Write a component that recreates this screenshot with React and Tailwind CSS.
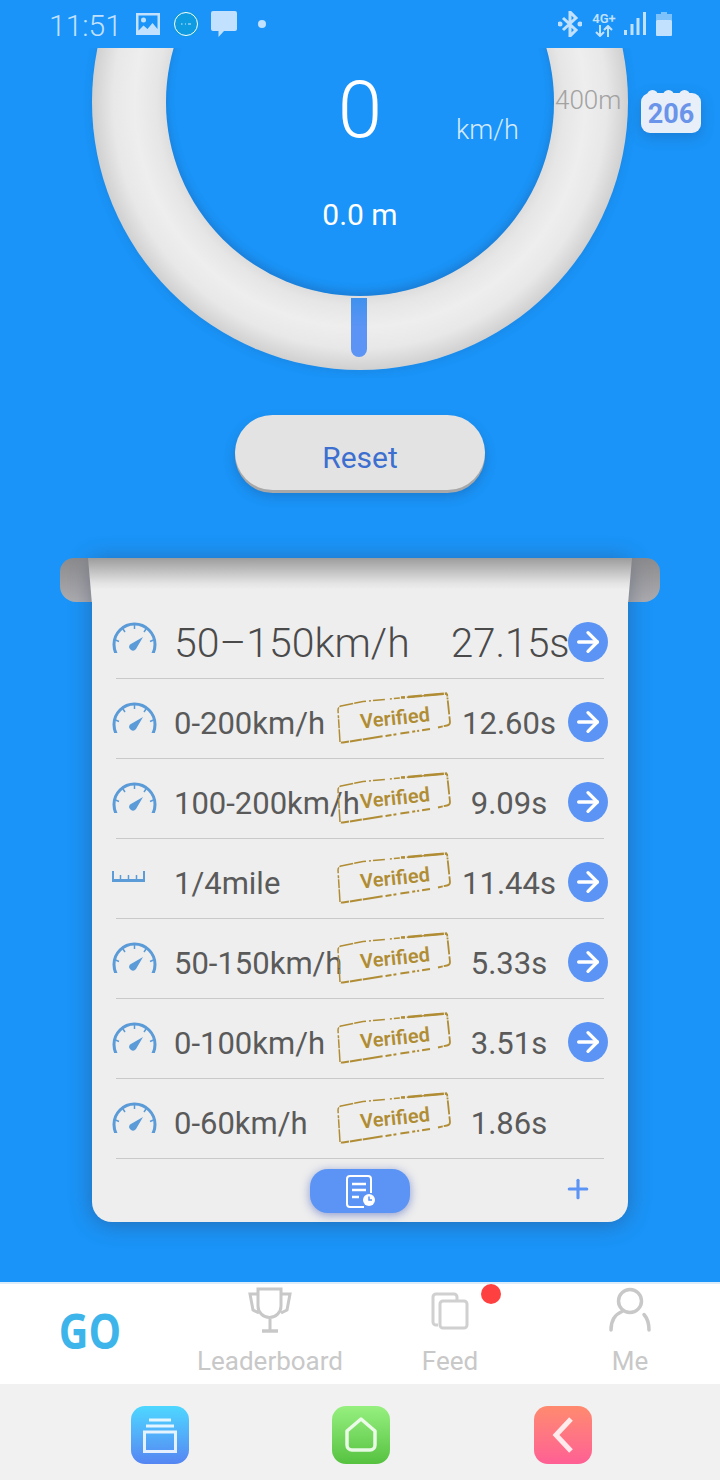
import { ArrowRight, Plus } from 'lucide-react';

const rows = [
  { icon: 'gauge', label: '0-200km/h', time: '12.60s', arrow: true },
  { icon: 'gauge', label: '100-200km/h', time: '9.09s', arrow: true },
  { icon: 'ruler', label: '1/4mile', time: '11.44s', arrow: true },
  { icon: 'gauge', label: '50-150km/h', time: '5.33s', arrow: true },
  { icon: 'gauge', label: '0-100km/h', time: '3.51s', arrow: true },
  { icon: 'gauge', label: '0-60km/h', time: '1.86s', arrow: false },
];

function Gauge() {
  return (
    <svg width="45" height="31" viewBox="0 0 45 31" fill="none" stroke="#5b9bd8" className="shrink-0 -translate-y-[5px]">
      <circle cx="22.500" cy="22.500" r="20.500" strokeWidth="3" />
      <path d="M22.500 3v4M11 7l2 3M34 7l-2 3M3.500 18l3.500 1.500M41.500 18l-3.500 1.500" strokeWidth="1.500" />
      <path d="M18 22.500 L31 15 L24 27 A3.500 3.500 0 0 1 18 22.500Z" fill="#5b9bd8" stroke="none" />
    </svg>
  );
}

function Ruler() {
  return (
    <div className="flex h-[34px] w-[45px] shrink-0 items-center">
      <svg width="33" height="11" viewBox="0 0 33 11" fill="none" stroke="#5b9bd8" className="-mt-3">
        <path d="M0 9.500h33" strokeWidth="3" />
        <path d="M1 0v9M32 0v9" strokeWidth="2" />
        <path d="M8.500 4v5M16.500 4v5M24.500 4v5" strokeWidth="1.500" />
      </svg>
    </div>
  );
}

function Stamp() {
  return (
    <div className="relative h-[52px] w-[116px] shrink-0 -translate-y-[5px]">
      <svg width="116" height="52" viewBox="0 0 116 52" fill="none" stroke="#b08d35" className="absolute inset-0">
        <path d="M28 9.500 L6 14 Q3 15 3 18 L5 50" strokeWidth="1.500" strokeDasharray="9 1 14 1 6 2 3 1" />
        <path d="M28 9.500 L112 1.500" strokeWidth="1.500" strokeDasharray="3 3 2 2 12 5 2 2 6 3 2 2 8 4 2 1" />
        <path d="M66 5.500 L112 1.500" strokeWidth="2.500" strokeDasharray="4 3 14 2 20 1" />
        <path d="M112 1.500 L115 30 Q115 33 112 33.500 L103 35.500" strokeWidth="1.800" strokeDasharray="3 1 2 1 14 2 14 1 8 6" />
        <path d="M95 37 L8 50.500 Q5 51 5 49" strokeWidth="2" strokeDasharray="8 3 2 2 3 3 9 4 3 2 6 3 20 1 12 1" />
      </svg>
      <span className="absolute inset-0 flex -rotate-6 items-center justify-center pl-1 text-[20px] font-semibold text-[#b08d35]">
        Verified
      </span>
    </div>
  );
}

function GoArrow() {
  return (
    <div className="relative z-10 flex h-10 w-10 shrink-0 -translate-y-px items-center justify-center rounded-full bg-[#5b94f5]">
      <ArrowRight size={32} strokeWidth={2.500} className="text-white" />
    </div>
  );
}

function StatusBar() {
  return (
    <div className="relative z-10 flex h-12 shrink-0 items-center bg-[#1a94f8] pl-[49px] pr-[48px] text-[#c2e1ff]">
      <span className="w-[87px] translate-y-px text-[30px] font-light">11:51</span>
      <svg width="24" height="24" viewBox="0 0 24 24" className="shrink-0">
        <path fillRule="evenodd" d="M0 1h24v22H0zM2.500 3.500v15l5-5 4 3.500 5-6 5 6V3.500z" fill="currentColor" />
        <circle cx="7.500" cy="8" r="2.500" fill="currentColor" />
      </svg>
      <svg width="26" height="26" viewBox="0 0 26 26" className="ml-[13px] shrink-0">
        <circle cx="13" cy="13" r="13" fill="#0f9be2" />
        <circle cx="13" cy="13" r="11.500" fill="none" stroke="#fff" strokeWidth="1" />
        <path d="M8 13h1.500M12 13h1M15 13h3" stroke="#cfeaff" strokeWidth="1" />
      </svg>
      <svg width="26" height="26" viewBox="0 0 26 26" className="ml-[12px] shrink-0">
        <path d="M2 0h22a2 2 0 0 1 2 2v16a2 2 0 0 1-2 2H13l-5.500 6v-6H2a2 2 0 0 1-2-2V2a2 2 0 0 1 2-2z" fill="currentColor" />
      </svg>
      <div className="ml-[21px] h-2 w-2 rounded-full bg-[#c2e1ff]" />
      <div className="ml-auto flex items-center">
        <svg width="24" height="26" viewBox="0 0 24 26" fill="none" stroke="currentColor" strokeWidth="3" className="shrink-0">
          <path d="M5 7l13 12-6 6V1l6 6L5 19" />
          <circle cx="2" cy="13" r="1" fill="currentColor" />
          <circle cx="22" cy="13" r="1" fill="currentColor" />
        </svg>
        <div className="ml-[9px] flex w-[26px] flex-col items-center">
          <span className="text-[13px] leading-[13px] font-semibold">4G+</span>
          <svg width="20" height="12" viewBox="0 0 18 12" fill="none" stroke="currentColor" strokeWidth="2">
            <path d="M5 0v10M1 7l4 4 4-4M13 12V2M9 5l4-4 4 4" />
          </svg>
        </div>
        <svg width="22" height="24" viewBox="0 0 22 24" className="ml-[7px] shrink-0">
          <rect x="0" y="18" width="3" height="5" fill="currentColor" />
          <rect x="6.500" y="12" width="3" height="11" fill="currentColor" />
          <rect x="12.500" y="6" width="3" height="17" fill="currentColor" />
          <rect x="19" y="0" width="3" height="23" fill="currentColor" />
        </svg>
        <svg width="16" height="24" viewBox="0 0 16 24" className="ml-[10px] shrink-0">
          <path d="M5 0h6v2h5v6H0V2h5z" fill="currentColor" opacity=".6" />
          <rect x="0" y="8" width="16" height="16" rx="1" fill="currentColor" />
        </svg>
      </div>
    </div>
  );
}

function Speedometer() {
  return (
    <div className="relative h-[330px] shrink-0 overflow-hidden">
      <div className="mx-auto -mt-[214px] flex h-[536px] w-[536px] items-center justify-center rounded-full bg-[radial-gradient(circle_closest-side,#dcdcdc_72%,#e6e6e6_76%,#eeeeee_84%,#e8e8e8_92%,#d0d0d0_100%)] shadow-[0_2px_10px_rgba(30,70,130,0.15)]">
        <div className="h-[388px] w-[388px] rounded-full bg-[#1a94f8] shadow-[inset_0_-4px_8px_rgba(30,70,130,0.3)]" />
      </div>
      <span className="absolute top-[14px] left-0 w-full text-center text-[80px] leading-[96px] font-light text-white">0</span>
      <span className="absolute top-[65px] left-[456px] text-[27px] leading-[34px] font-light text-[#d4eaff]">km/h</span>
      <span className="absolute top-[150px] left-0 w-full text-center text-[30px] leading-[34px] text-white">0.0 m</span>
      <span className="absolute top-[35px] left-[555px] text-[26px] leading-[34px] font-light text-[#a2a2a2]">400m</span>
      <div className="absolute top-[250px] left-[351px] h-[59px] w-4 rounded-b-lg bg-gradient-to-b from-[#3e91ee] to-[#5b94f5] to-50%" />
      <div className="absolute top-[45px] left-[641px] h-10 w-[60px] rounded-[9px] bg-[#e9eff8] pt-px text-center text-[27px] leading-10 font-bold text-[#6a94ea] shadow-[0_4px_14px_rgba(30,70,130,0.3)]">
        <div className="absolute -top-[3px] left-[6px] flex gap-[5px]">
          <div className="h-2 w-[11px] rounded-t-full bg-[#e9eff8]" />
          <div className="h-2 w-[11px] rounded-t-full bg-[#e9eff8]" />
          <div className="h-2 w-[11px] rounded-t-full bg-[#e9eff8]" />
        </div>
        <span className="relative">206</span>
      </div>
    </div>
  );
}

function ResultsCard() {
  return (
    <div className="relative mx-auto mt-[180px] w-[536px] shrink-0">
      {/* roll behind the paper */}
      <div className="absolute -top-0 -left-8 h-11 w-[600px] rounded-t-[14px] rounded-b-[16px] bg-gradient-to-b from-[#8b8b8e] to-[#acacb0]" />
      <div className="relative h-[664px] rounded-b-[20px] bg-[#eeeeee] shadow-[0_2px_22px_rgba(50,60,90,0.45)]">
        <div className="absolute -top-0 -left-1 h-11 w-[544px] bg-[linear-gradient(#9c9c9c,#e4e4e4_58%,#eeeeee_72%)] [clip-path:polygon(0_0,100%_0,99.300%_100%,0.700%_100%)]" />
        <div className="relative px-6 pt-[41px]">
          <div className="h-20 border-b border-[#c9c9c9]">
            <div className="-mx-1 flex h-full items-center pt-2 text-[#4a4a4a]">
              <Gauge />
              <span className="ml-[17px] w-[277px] shrink-0 translate-y-px text-[41px] font-light whitespace-nowrap">50–150km/h</span>
              <span className="w-[117px] shrink-0 translate-y-px text-[40px] font-light whitespace-nowrap">27.15s</span>
              <GoArrow />
            </div>
          </div>
          {rows.map((row) => (
            <div key={row.label} className="h-20 border-b border-[#c9c9c9]">
              <div className="-mx-1 flex h-full items-center pt-2 text-[#5a5a5a]">
                {row.icon === 'gauge' ? <Gauge /> : <Ruler />}
                <span className="ml-[17px] w-[161px] shrink-0 translate-y-0.5 text-[31px] whitespace-nowrap">{row.label}</span>
                <Stamp />
                <span className="mr-px w-[116px] shrink-0 translate-y-0.5 text-center text-[31px]">{row.time}</span>
                {row.arrow && <GoArrow />}
              </div>
            </div>
          ))}
          <div className="relative flex h-[63px] items-center justify-center">
            <div className="flex h-11 w-[100px] items-center justify-center rounded-[18px] bg-[#5b94f5] shadow-[0_2px_10px_rgba(40,70,180,0.5)]">
              <svg width="30" height="34" viewBox="0 0 30 34" fill="none" stroke="#fff" strokeWidth="2">
                <path d="M26 19V5a3 3 0 0 0-3-3H5a3 3 0 0 0-3 3v25a3 3 0 0 0 3 3h14" />
                <path d="M7 10h14M7 16h14M7 23h7" strokeWidth="2.500" />
                <circle cx="24" cy="26" r="6" fill="#fff" stroke="none" />
                <path d="M24 22.500V26h3" stroke="#5b94f5" strokeWidth="1.500" />
              </svg>
            </div>
            <Plus size={30} strokeWidth={2.500} className="absolute top-[15px] right-[11px] text-[#5b94f5]" />
          </div>
        </div>
      </div>
    </div>
  );
}

function TabBar() {
  return (
    <div className="relative mt-auto grid h-[102px] shrink-0 grid-cols-4 border-t-2 border-[#dcecf9] bg-white text-[26px] text-[#c8c8c8]">
      <div className="flex items-center justify-center pb-1">
        <span className="scale-y-[1.160] font-['Open_Sans',sans-serif] text-[41px] font-bold text-[#3db5ea]">GO</span>
      </div>
      <div className="flex flex-col items-center pt-[3px]">
        <svg width="44" height="46" viewBox="0 0 44 46" fill="none" stroke="#c8c8c8" strokeWidth="3" className="shrink-0">
          <path d="M10 2h23v17a11.500 11.500 0 0 1-23 0zM10 7H2l3 16 6 3M33 7h9l-3 16-6 3M22 31v13" />
          <path d="M14 44h16" strokeWidth="3.500" />
        </svg>
        <span className="mt-[10px] leading-[36px]">Leaderboard</span>
      </div>
      <div className="relative flex flex-col items-center pt-[8px]">
        <svg width="38" height="38" viewBox="0 0 38 38" fill="none" stroke="#d0d0d0" strokeWidth="3" className="shrink-0">
          <path d="M7 33H5a3 3 0 0 1-3-3V5a3 3 0 0 1 3-3h18a3 3 0 0 1 3 3v3" />
          <rect x="9" y="9" width="27" height="27" rx="3" />
        </svg>
        <span className="mt-[13px] leading-[36px]">Feed</span>
        <div className="absolute top-0 left-[121px] h-5 w-5 rounded-full bg-[#ff4040]" />
      </div>
      <div className="flex flex-col items-center pt-[3px]">
        <svg width="42" height="46" viewBox="0 0 42 46" fill="none" stroke="#c8c8c8" strokeWidth="3.500" strokeLinecap="round" className="shrink-0">
          <circle cx="21" cy="14" r="11.500" />
          <path d="M2 43c0-10 5-16 11-18.500M40 43c0-7-2-12-5-15.500" />
        </svg>
        <span className="mt-[10px] leading-[36px]">Me</span>
      </div>
    </div>
  );
}

function SystemNav() {
  return (
    <div className="flex h-24 shrink-0 items-start bg-[#f1f1f1] pt-[22px] pl-[131px]">
      <div className="flex h-[58px] w-[58px] items-center justify-center rounded-[14px] bg-gradient-to-b from-[#4dd7ff] to-[#5585f2]">
        <svg width="34" height="35" viewBox="0 0 34 35" fill="none" stroke="#fff" strokeOpacity=".85">
          <path d="M6 2h22M3 8h28" strokeWidth="3" />
          <rect x="1.500" y="14" width="31" height="19.500" strokeWidth="3" />
        </svg>
      </div>
      <div className="ml-[143px] flex h-[58px] w-[58px] items-center justify-center rounded-[14px] bg-gradient-to-b from-[#96f07f] to-[#55c23f]">
        <svg width="36" height="36" viewBox="0 0 36 36" fill="none" stroke="#fff" strokeOpacity=".85" strokeWidth="3.500">
          <path d="M18 2 L32 14 V28 a5 5 0 0 1-5 5 H9 a5 5 0 0 1-5-5 V14 Z" strokeLinejoin="round" />
        </svg>
      </div>
      <div className="ml-[144px] flex h-[58px] w-[58px] items-center justify-center rounded-[14px] bg-gradient-to-b from-[#ff8a6e] to-[#ff5f94]">
        <svg width="22" height="36" viewBox="0 0 22 36" fill="none" stroke="#fff" strokeOpacity=".85" strokeWidth="5">
          <path d="M19 2 L4 18 L19 34" />
        </svg>
      </div>
    </div>
  );
}

export default function App() {
  return (
    <div className="relative flex h-[1480px] w-[720px] flex-col overflow-hidden bg-[#1a94f8] font-['Roboto',sans-serif]">
      <StatusBar />
      <Speedometer />
      <div className="absolute top-[415px] left-[235px] flex h-[75px] w-[250px] items-center justify-center rounded-full bg-[#e3e3e3] pt-[10px] text-[30px] text-[#3c6fcf] shadow-[0_3px_0_#a8a8a8,0_6px_12px_rgba(30,60,110,0.3)]">
        Reset
      </div>
      <ResultsCard />
      <TabBar />
      <SystemNav />
    </div>
  );
}
